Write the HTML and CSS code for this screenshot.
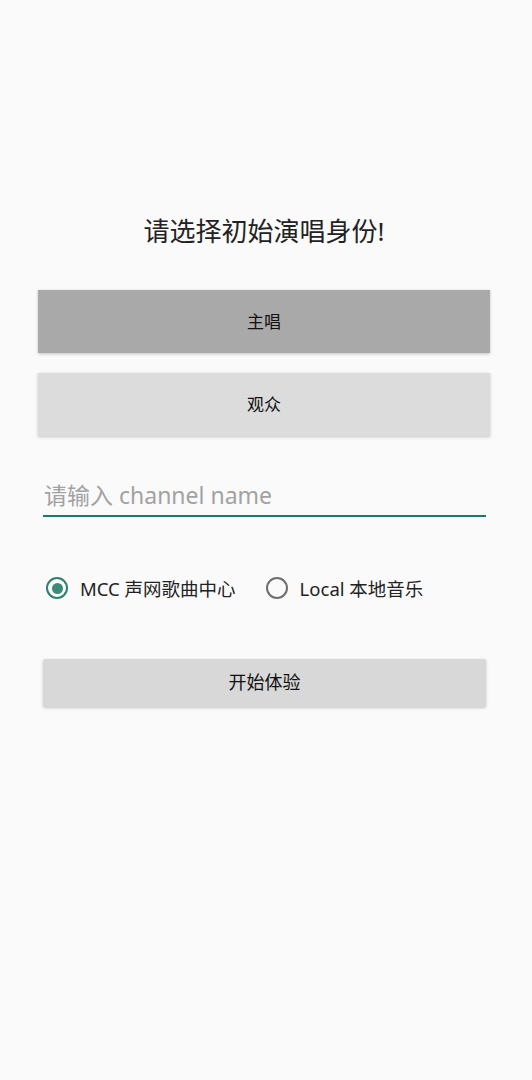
FILE: index.html
```html
<html>
<head>
<meta charset="utf-8">
<link rel="stylesheet" href="styles.css">
</head>
<body>
<article class="page">
<h1 class="title">请选择初始演唱身份!</h1>
<button class="role role-on">主唱</button>
<button class="role">观众</button>
<form class="join">
<input class="channel" type="text" placeholder="请输入 channel name" />
<div class="source">
<label class="radio"><span class="dot dot-on"></span>MCC 声网歌曲中心</label>
<label class="radio"><span class="dot"></span>Local 本地音乐</label>
</div>
<button class="start" type="button">开始体验</button>
</form>
</article>
</body>
</html>
```

FILE: styles.css
```css
body {
    margin: 0;
    background-color: #fafafa;
    font-family: "Noto Sans", "Noto Sans CJK SC", sans-serif;
    color: #1a1a1a;
}
.page {
    display: flex;
    flex-direction: column;
    padding: 216px 42px 0 38px;
}
.title {
    margin: 0 0 43px;
    font-size: 26px;
    font-weight: normal;
    line-height: 31px;
    text-align: center;
    color: #222;
}
.role {
    display: block;
    height: 63px;
    margin: 0 0 20px;
    padding: 0 0 2px;
    font-family: inherit;
    font-size: 17px;
    color: #111;
    background-color: #dcdcdc;
    border: none;
    box-shadow: 0 1px 3px rgba(0, 0, 0, .22);
}
.role-on {
    background-color: #a9a9a9;
}
.join {
    display: flex;
    flex-direction: column;
    margin: 22px 0 0;
    padding: 0 4px 0 5px;
}
.channel {
    height: 39px;
    padding: 0 0 4px 1px;
    font-family: inherit;
    font-size: 23px;
    color: #222;
    background: transparent;
    border: none;
    border-bottom: 2px #1e7868 solid;
    outline: none;
}
.channel::placeholder {
    color: #a2a2a2;
}
.source {
    display: flex;
    align-items: center;
    gap: 30px;
    height: 32px;
    margin: 55px 0 0 3px;
}
.radio {
    display: flex;
    align-items: center;
    gap: 12px;
    font-size: 18.5px;
    color: #222;
}
.dot {
    display: flex;
    align-items: center;
    justify-content: center;
    width: 18px;
    height: 18px;
    border: 2.5px #6e6e6e solid;
    border-radius: 50%;
}
.dot-on {
    border-color: #2f7f70;
}
.dot-on:before {
    content: '';
    width: 11px;
    height: 11px;
    border-radius: 50%;
    background-color: #3b8a7a;
}
.start {
    height: 48px;
    margin: 55px 0 0;
    padding: 0 0 4px;
    font-family: inherit;
    font-size: 18px;
    color: #111;
    background-color: #d7d8d7;
    border: none;
    border-radius: 2px;
    box-shadow: 0 1px 3px rgba(0, 0, 0, .22);
}
```
